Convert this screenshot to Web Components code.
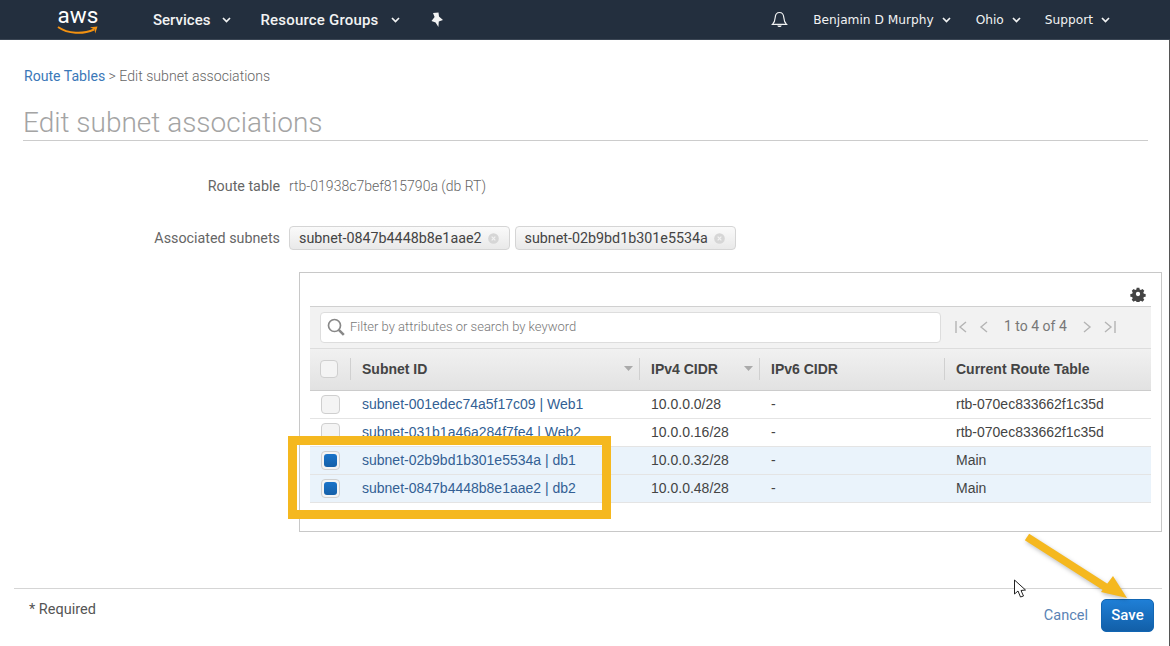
<!DOCTYPE html>
<html>
<head>
<meta charset="utf-8">
<title>Edit subnet associations</title>
<style>
  html, body { margin: 0; padding: 0; background: #fff; }
  body { width: 1170px; height: 646px; overflow: hidden; position: relative; font-family: Roboto, sans-serif; }
</style>
</head>
<body>
<aws-topbar></aws-topbar>
<edit-page>
  <bread-crumbs slot="head"></bread-crumbs>
  <form-row label="Route table"><span style="font:300 14px Roboto,sans-serif;color:#666">rtb-01938c7bef815790a (db RT)</span></form-row>
  <form-row label="Associated subnets" chips>
    <subnet-chip>subnet-0847b4448b8e1aae2</subnet-chip>
    <subnet-chip>subnet-02b9bd1b301e5534a</subnet-chip>
  </form-row>
  <subnet-panel></subnet-panel>
</edit-page>
<page-footer></page-footer>
<call-outs></call-outs>

<script>
(function(){

  const chevron = `<svg width="9" height="6" viewBox="0 0 9 6"><path d="M1 1 L4.5 4.5 L8 1" fill="none" stroke="currentColor" stroke-width="1.7"/></svg>`;

  customElements.define("aws-topbar", class extends HTMLElement {
    constructor() {
      super();
      this.attachShadow({ mode: "open" }).innerHTML = `
      <style>
        :host { display: flex; align-items: center; height: 40px; background: #232f3e; color: #f2f3f3; box-sizing: border-box; border-bottom: 1px solid #3b4654; }
        .logo { width: 42px; margin-left: 57px; height: 34px; position: relative; display: flex; justify-content: center; align-items: flex-start; }
        .logo span { font: 400 22.5px/26px Roboto, sans-serif; color: #fff; margin-top: -1px; }
        .logo svg { position: absolute; left: 0; top: 22px; }
        .left { display: flex; align-items: center; font: 500 15px Roboto, sans-serif; margin-left: 54px; }
        .left span { display: inline-flex; align-items: center; gap: 12px; margin-right: 29px; }
        .left span em { font-style: normal; letter-spacing: .2px; }
        .right { margin-left: auto; display: flex; align-items: center; font: 12.2px "DejaVu Sans", sans-serif; margin-right: 60px; }
        .right span { display: inline-flex; align-items: center; gap: 8px; margin-right: 25px; }
        .right span.ohio { margin-right: 24px; }
        .right span:last-child { margin-right: 0; }
        .bell { margin-right: 25px; display: flex; }
        .pin { display: flex; margin-left: 1px; }
      </style>
      <div class="logo"><span>aws</span>
        <svg width="42" height="12" viewBox="0 0 42 12"><path d="M1 2 C11 9 26 9.5 37 4.5" fill="none" stroke="#f29111" stroke-width="2"/><path d="M33 2.2 L40.5 1.6 L38.2 8.4 L37.5 4.6 Z" fill="#f29111"/></svg>
      </div>
      <div class="left">
        <span>Services ${chevron}</span>
        <span><em>Resource Groups</em> ${chevron}</span>
        <div class="pin"><svg width="14" height="16" viewBox="0 0 14 16"><path d="M3 1 L8.5 0.5 L9 4.5 L13 8 L8.8 9.4 L8.4 15 L5.6 10.4 L1.5 9 L4.6 5 Z" fill="#f2f3f3"/></svg></div>
      </div>
      <div class="right">
        <div class="bell"><svg width="17" height="18" viewBox="0 0 17 18"><path d="M8.5 1.5 C5.5 1.5 4.4 3.8 4.2 6.5 C4 9.5 3.4 11.6 1.5 13.4 L15.5 13.4 C13.6 11.6 13 9.5 12.8 6.5 C12.6 3.8 11.5 1.5 8.5 1.5 Z" fill="none" stroke="#f2f3f3" stroke-width="1.2"/><path d="M6.3 14.6 C6.8 16.6 10.2 16.6 10.7 14.6 Z" fill="#f2f3f3"/></svg></div>
        <span>Benjamin D Murphy ${chevron}</span>
        <span class="ohio">Ohio ${chevron}</span>
        <span>Support ${chevron}</span>
      </div>`;
    }
  });

  customElements.define("bread-crumbs", class extends HTMLElement {
    constructor() {
      super();
      this.attachShadow({ mode: "open" }).innerHTML = `
      <style>
        :host { display: block; font: 300 14.1px/18px Roboto, sans-serif; color: #666; padding-top: 27px; padding-left: 1px; }
        a { color: #3b78b8; font-weight: 400; text-decoration: none; }
      </style>
      <a href="#">Route Tables</a> &gt; Edit subnet associations`;
    }
  });

  customElements.define("edit-page", class extends HTMLElement {
    constructor() {
      super();
      this.attachShadow({ mode: "open" }).innerHTML = `
      <style>
        :host { display: block; padding: 0 0 0 23px; }
        h1 { font: 300 28px/36px Roboto, sans-serif; color: #a4a4a4; margin: 20px 22px 0 0; height: 35px; border-bottom: 1px solid #ccc; box-sizing: content-box; }
        .rows { padding-top: 32px; }
      </style>
      <slot name="head"></slot>
      <h1>Edit subnet associations</h1>
      <div class="rows"><slot></slot></div>`;
    }
  });

  customElements.define("form-row", class extends HTMLElement {
    constructor() {
      super();
      this.attachShadow({ mode: "open" }).innerHTML = `
      <style>
        :host { display: flex; align-items: center; height: 26px; margin-bottom: 26px; }
        .label { width: 266px; text-align: right; padding-right: 9px; box-sizing: border-box; font: 14.3px Roboto, sans-serif; color: #666; flex: none; }
        .value { display: flex; gap: 5px; align-items: center; }
      </style>
      <div class="label">${this.getAttribute("label")}</div>
      <div class="value"><slot></slot></div>`;
    }
  });

  customElements.define("subnet-chip", class extends HTMLElement {
    constructor() {
      super();
      this.attachShadow({ mode: "open" }).innerHTML = `
      <style>
        :host { display: inline-flex; align-items: center; gap: 6px; height: 24px; box-sizing: border-box; padding: 0 10px 0 9px; border: 1px solid #d5d5d5; border-radius: 4px; background: linear-gradient(#fafafa, #e9e9e9); font: 14.3px Roboto, sans-serif; color: #444; }
      </style>
      <slot></slot>
      <svg width="11" height="11" viewBox="0 0 12 12"><circle cx="6" cy="6" r="5.8" fill="#d6d6d6"/><path d="M4 4 L8 8 M8 4 L4 8" stroke="#f2f2f2" stroke-width="1.3"/></svg>`;
    }
  });

  customElements.define("subnet-row", class extends HTMLElement {
    constructor() {
      super();
      const on = this.hasAttribute("selected");
      this.attachShadow({ mode: "open" }).innerHTML = `
      <style>
        :host { display: grid; grid-template-columns: 41px 289px 120px 185px 1fr; align-items: center; height: 28px; box-sizing: border-box; border-bottom: 1px solid #e4e4e4; background: ${on ? "#eaf3fb" : "#fff"}; font: 14px "Liberation Sans", sans-serif; color: #444; }
        .box { width: 19px; height: 19px; margin-left: 11px; box-sizing: border-box; border: 1px solid #cfcfcf; border-radius: 4px; background: #f4f4f4; display: flex; align-items: center; justify-content: center; }
        .box i { display: ${on ? "block" : "none"}; width: 13px; height: 13px; border-radius: 3px; background: linear-gradient(#1a73c9, #1560a8); }
        .cell { padding-left: 11px; margin-bottom: 2px; }
        a { color: #335f94; text-decoration: none; }
      </style>
      <div><div class="box"><i></i></div></div>
      <div class="cell"><a href="#">${this.getAttribute("name")}</a></div>
      <div class="cell">${this.getAttribute("cidr")}</div>
      <div class="cell">-</div>
      <div class="cell">${this.getAttribute("rt")}</div>`;
    }
  });

  customElements.define("subnet-panel", class extends HTMLElement {
    constructor() {
      super();
      const sort = `<svg width="9" height="5" viewBox="0 0 9 5"><path d="M0 0 H9 L4.5 5 Z" fill="#aaa"/></svg>`;
      const pager = (d) => `<svg width="14" height="14" viewBox="0 0 14 14"><path d="${d}" fill="none" stroke="#b4b4b4" stroke-width="1.4"/></svg>`;
      this.attachShadow({ mode: "open" }).innerHTML = `
      <style>
        :host { display: block; width: 863px; height: 260px; box-sizing: border-box; margin: -5px 0 0 276px; border: 1px solid #c8c8c8; padding: 0 10px; }
        .gear { height: 33px; display: flex; justify-content: flex-end; align-items: flex-end; padding-right: 5px; padding-bottom: 4px; box-sizing: border-box; }
        .tools { display: flex; align-items: center; height: 42px; box-sizing: border-box; border-top: 1px solid #d0d0d0; background: #f2f2f2; padding-left: 10px; }
        .filter { width: 621px; height: 31px; box-sizing: border-box; border: 1px solid #ddd; border-radius: 4px; background: #fff; display: flex; align-items: center; gap: 5px; padding-left: 6px; font: 300 13px Roboto, sans-serif; color: #777; margin-top: -1px; }
        .filter span { margin-bottom: 2px; }
        .pages { display: flex; align-items: center; margin-left: 13px; margin-bottom: 1px; font: 14px Roboto, sans-serif; color: #777; gap: 9px; }
        .pages b { font-weight: 400; margin: 0 4px 2px 4px; }
        .head { display: grid; grid-template-columns: 41px 289px 120px 185px 1fr; height: 43px; align-items: center; box-sizing: border-box; background: linear-gradient(#f1f1f1, #e2e2e2); border-top: 1px solid #ddd; border-bottom: 1px solid #ccc; font: bold 14px "Liberation Sans", sans-serif; color: #444; }
        .head > div { height: 22px; margin-bottom: 2px; display: flex; align-items: center; justify-content: space-between; box-sizing: border-box; padding: 0 11px; border-right: 1px solid #d0d0d0; }
        .head > div:first-child { padding: 0 0 0 10px; }
        .head > div:last-child { border-right: 0; }
        .head svg { margin-right: -5px; }
        .box { width: 18px; height: 18px; box-sizing: border-box; border: 1px solid #cfcfcf; border-radius: 4px; background: #f4f4f4; }
      </style>
      <div class="gear"><svg width="16" height="16" viewBox="0 0 16 16"><path fill="#444" fill-rule="evenodd" d="M6.5 1h3l.4 2 1.3.6 1.8-1.1 2 2-1.1 1.8.6 1.3 2 .4v3l-2 .4-.6 1.3 1.1 1.8-2 2-1.8-1.1-1.3.6-.4 2h-3l-.4-2-1.3-.6-1.8 1.1-2-2 1.1-1.8-.6-1.3-2-.4v-3l2-.4.6-1.3L1.1 4.5l2-2 1.8 1.1 1.3-.6zM8 5.6a2.4 2.4 0 1 0 0 4.8 2.4 2.4 0 0 0 0-4.8z" transform="translate(.8 .8) scale(.9)"/></svg></div>
      <div class="tools">
        <div class="filter">
          <svg width="18" height="18" viewBox="0 0 18 18"><circle cx="7.5" cy="7.5" r="6" fill="none" stroke="#888" stroke-width="1.7"/><path d="M11.8 11.8 L16.8 16.8" stroke="#888" stroke-width="2.6"/></svg>
          <span>Filter by attributes or search by keyword</span>
        </div>
        <div class="pages">
          ${pager("M2 1 V13 M12 2 L6 7 L12 12")}
          ${pager("M10 2 L4 7 L10 12")}
          <b>1 to 4 of 4</b>
          ${pager("M4 2 L10 7 L4 12")}
          ${pager("M2 2 L8 7 L2 12 M12 1 V13")}
        </div>
      </div>
      <div class="head">
        <div><div class="box"></div></div>
        <div>Subnet ID ${sort}</div>
        <div>IPv4 CIDR ${sort}</div>
        <div>IPv6 CIDR</div>
        <div>Current Route Table</div>
      </div>
      <subnet-row name="subnet-001edec74a5f17c09 | Web1" cidr="10.0.0.0/28" rt="rtb-070ec833662f1c35d"></subnet-row>
      <subnet-row name="subnet-031b1a46a284f7fe4 | Web2" cidr="10.0.0.16/28" rt="rtb-070ec833662f1c35d"></subnet-row>
      <subnet-row selected name="subnet-02b9bd1b301e5534a | db1" cidr="10.0.0.32/28" rt="Main"></subnet-row>
      <subnet-row selected name="subnet-0847b4448b8e1aae2 | db2" cidr="10.0.0.48/28" rt="Main"></subnet-row>`;
    }
  });

  customElements.define("page-footer", class extends HTMLElement {
    constructor() {
      super();
      this.attachShadow({ mode: "open" }).innerHTML = `
      <style>
        :host { display: flex; align-items: center; height: 58px; margin: 56px 8px 0 14px; padding: 0 8px 0 15px; border-top: 1px solid #d5d5d5; font: 14.5px Roboto, sans-serif; color: #555; }
        .req { margin-top: -17px; }
        .cancel { margin-left: auto; color: #5a83b5; font-size: 14.5px; margin-top: -6px; }
        button { margin-left: 13px; width: 53px; height: 33px; border: 1px solid #1266b3; border-radius: 5px; background: linear-gradient(#1f7fd6, #125fa8); color: #fff; font: 500 15px Roboto, sans-serif; padding: 0; margin-top: -6px; }
      </style>
      <div class="req">* Required</div>
      <div class="cancel">Cancel</div>
      <button>Save</button>`;
    }
  });

  // annotations drawn over the screenshot
  customElements.define("call-outs", class extends HTMLElement {
    constructor() {
      super();
      this.attachShadow({ mode: "open" }).innerHTML = `
      <style>
        :host { position: absolute; inset: 0; pointer-events: none; display: block; }
        .rect { position: absolute; left: 288px; top: 436px; width: 323px; height: 83px; box-sizing: border-box; border: 9px solid #f5b81f; }
        svg { position: absolute; left: 0; top: 0; }
        .edge { position: absolute; right: 0; top: 40px; bottom: 0; width: 1px; background: #555; }
        .arrow { filter: drop-shadow(1px 2px 2px rgba(0,0,0,.25)); }
      </style>
      <div class="rect"></div>
      <div class="edge"></div>
      <svg width="1170" height="646" viewBox="0 0 1170 646">
        <path d="M1014.5 580 V594 L1018 591 L1020.5 597 L1023.5 596 L1021 590.5 L1025.5 590 Z" fill="#fff" stroke="#222" stroke-width="1"/>
        <g class="arrow">
          <path d="M1027 537 L1110 590" stroke="#f5b81f" stroke-width="8" fill="none"/>
          <path d="M1113 576 L1127 598 L1101 592 Z" fill="#f5b81f"/>
        </g>
      </svg>`;
    }
  });

})();
</script>
</body>
</html>
